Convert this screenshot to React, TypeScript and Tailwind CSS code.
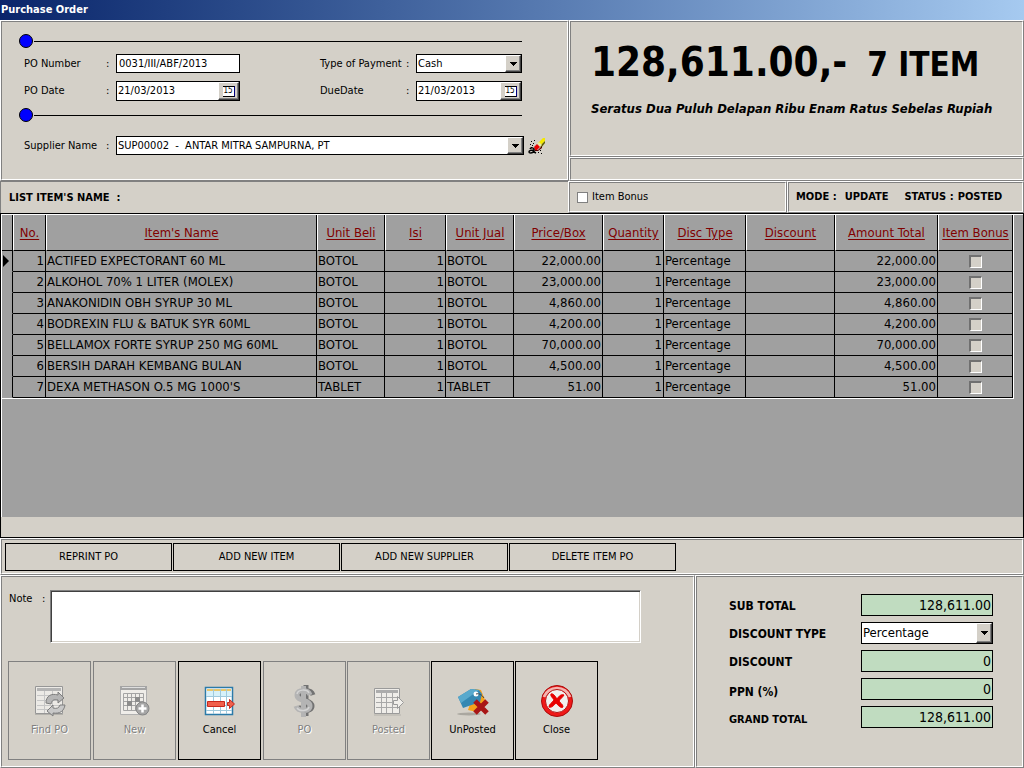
import React, { useState } from "react";

const items = [
  { name: "ACTIFED EXPECTORANT 60 ML", unit: "BOTOL", price: "22,000.00" },
  { name: "ALKOHOL 70% 1 LITER (MOLEX)", unit: "BOTOL", price: "23,000.00" },
  { name: "ANAKONIDIN OBH SYRUP 30 ML", unit: "BOTOL", price: "4,860.00" },
  { name: "BODREXIN FLU & BATUK SYR 60ML", unit: "BOTOL", price: "4,200.00" },
  { name: "BELLAMOX FORTE SYRUP 250 MG 60ML", unit: "BOTOL", price: "70,000.00" },
  { name: "BERSIH DARAH KEMBANG BULAN", unit: "BOTOL", price: "4,500.00" },
  { name: "DEXA METHASON O.5 MG 1000'S", unit: "TABLET", price: "51.00" },
];

const columns = [
  { title: "No.", width: "w-[33px]" },
  { title: "Item's Name", width: "" },
  { title: "Unit Beli", width: "w-[68px]" },
  { title: "Isi", width: "w-[61px]" },
  { title: "Unit Jual", width: "w-[68px]" },
  { title: "Price/Box", width: "w-[89px]" },
  { title: "Quantity", width: "w-[61px]" },
  { title: "Disc Type", width: "w-[82px]" },
  { title: "Discount", width: "w-[89px]" },
  { title: "Amount Total", width: "w-[103px]" },
  { title: "Item Bonus", width: "w-[75px]" },
];

// raised outer edge with a sunken line inside it
function Panel({ className = "", children }: { className?: string; children?: React.ReactNode }) {
  return (
    <div className="flex h-full min-w-0 border border-t-white border-l-white border-r-[#808080] border-b-[#808080]">
      <div
        className={
          "min-w-0 flex-1 border border-t-[#808080] border-l-[#808080] border-r-white border-b-white " + className
        }
      >
        {children}
      </div>
    </div>
  );
}

function Divider() {
  return (
    <div className="flex items-center gap-px">
      <svg width="14" height="14" viewBox="0 0 14 14" aria-hidden="true">
        <circle cx="7" cy="7" r="6.5" fill="#0000ff" stroke="#000" />
      </svg>
      <div className="h-px w-[488px] bg-black" />
    </div>
  );
}

function SelectBox({ id, options, className }: { id: string; options: string[]; className: string }) {
  return (
    <div className={"relative border border-black bg-white " + className}>
      <select id={id} className="h-full w-full appearance-none bg-white pr-4 pl-px outline-none">
        {options.map((o) => (
          <option key={o}>{o}</option>
        ))}
      </select>
      <span className="pointer-events-none absolute inset-y-0 right-0 flex w-4 items-center justify-center border border-t-white border-l-white border-r-[#404040] border-b-[#404040] bg-[#d4d0c8] shadow-[inset_-1px_-1px_0_#808080]">
        <svg width="7" height="4" viewBox="0 0 7 4" shapeRendering="crispEdges" aria-hidden="true">
          <path d="M0 0h7v1H0zM1 1h5v1H1zM2 2h3v1H2zM3 3h1v1H3z" />
        </svg>
      </span>
    </div>
  );
}

function DateBox({ id, className }: { id: string; className: string }) {
  const [value, setValue] = useState("21/03/2013");

  return (
    <div className={"flex h-5 border border-black bg-white " + className}>
      <input
        id={id}
        type="text"
        value={value}
        onChange={(e) => setValue(e.target.value)}
        className="min-w-0 flex-1 pl-px outline-none"
      />
      <button
        type="button"
        aria-label="Open calendar"
        className="flex w-[21px] items-center justify-center border border-t-white border-l-white border-r-[#404040] border-b-[#404040] bg-[#d4d0c8] shadow-[inset_-1px_-1px_0_#808080]"
      >
        <span className="flex h-[11px] w-3 items-center justify-center border-t border-r border-b border-black border-r-[#000080] bg-white text-[8px] leading-none">
          15
        </span>
      </button>
    </div>
  );
}

function EraserIcon() {
  return (
    <svg width="18" height="18" viewBox="0 0 18 18" aria-hidden="true">
      <path d="M10 6l5-5h2v3l-5 5z" fill="#f4e800" />
      <path d="M12 9l5-5v2l-4 5z" fill="#606000" />
      <path d="M9 7l2-2 3 3-2 2z" fill="#e8e8a0" />
      <path d="M6 10l3-3 3 3-3 3H7z" fill="#e80000" />
      <path d="M7 13h3l4-4v2l-4 3H7z" fill="#500" />
      <path d="M2 12c1-2 4-1 4 0v4M6 13c-3 0-5 1-5 2s3 2 5-1M6 15l2 1" fill="none" stroke="#000" strokeWidth="1.500" />
      <path
        d="M3 4h1v1H3zM5 6h1v1H5zM2 7h1v1H2zM4 8h1v1H4zM3 10h1v1H3zM6 3h1v1H6zM10 15h1v1h-1zM12 13h1v1h-1zM13 16h1v1h-1z"
        fill="#000"
        shapeRendering="crispEdges"
      />
    </svg>
  );
}

function FindIcon() {
  return (
    <svg width="32" height="32" viewBox="1 0 32 32" aria-hidden="true">
      <path d="M2.500 1.500h27v27h-27z" fill="#eceae6" stroke="#969696" />
      <path d="M4 3h24v3H4z" fill="#b4b4b4" />
      <path d="M4 10.500h24M4 15.500h24M4 20.500h24M4 24.500h24M11.500 6v22M19.500 6v22" stroke="#c6c6c6" />
      <path d="M2 29.500h28" stroke="#b4b2ac" />
      <path
        d="M13 18c0-7 5-10 12-8V7l6 6-6 5v-3c-4-1-6 0-7 4z"
        fill="#b5b5b5"
        stroke="#7e7e7e"
        strokeLinejoin="round"
      />
      <path
        d="M32 20c-1 6-5 9-12 8v3l-6-5 6-6v3c4 1 6 0 7-3z"
        fill="#c8c8c8"
        stroke="#7e7e7e"
        strokeLinejoin="round"
      />
    </svg>
  );
}

function NewIcon() {
  return (
    <svg width="32" height="32" viewBox="1 0 32 32" aria-hidden="true">
      <path d="M2.500 1.500h26v28h-26z" fill="#efede9" stroke="#b0b0b0" />
      <path d="M2 1h27v4H2z" fill="#a4a4a4" />
      <path d="M4 2.500h23" stroke="#dedede" />
      <path
        d="M5.500 8.500h20v17h-20zM9.500 8v17M13.500 8v17M17.500 8v17M21.500 8v17M5 12.500h21M5 16.500h21M5 20.500h21"
        fill="none"
        stroke="#a4a4a4"
      />
      <path d="M17 12h5v5h-5zM9 16h5v5H9z" fill="#8c8c8c" />
      <circle cx="24.500" cy="23.500" r="6.500" fill="#a6a6a6" stroke="#858585" />
      <path d="M24.500 19.500v8M20.500 23.500h8" stroke="#fff" strokeWidth="2.500" />
    </svg>
  );
}

function CancelIcon() {
  return (
    <svg width="32" height="32" viewBox="1 0 32 32" aria-hidden="true">
      <path d="M2.500 2.500h27v27h-27z" fill="#fff" stroke="#2b7aa8" strokeWidth="1.500" />
      <path d="M4 6h24v6H4z" fill="#d6f1fa" />
      <path d="M3 11.500h26M3 20.500h26M3 25.500h26M10.500 4v25M17.500 4v25M23.500 4v25" stroke="#9fc9dc" />
      <path d="M4 4h6v2H4zM11 4h6v2h-6zM18 4h5v2h-5zM24 4h4v2h-4z" fill="#e8c66c" />
      <path d="M4.500 16.500h17v5h-17z" fill="#f0604c" stroke="#c8281c" />
      <path d="M24.500 17.500h2v-3l5 4.500-5 4.500v-3h-2z" fill="#f0604c" stroke="#c8281c" />
    </svg>
  );
}

function MoneyIcon() {
  return (
    <svg width="32" height="32" viewBox="1 0 32 32" fill="none" aria-hidden="true">
      <path
        d="M25 10c-2-6-13-6-13 0 0 7 12 4 12 11 0 6-12 6-14 0M18 0v31"
        stroke="#727272"
        strokeWidth="5"
      />
      <path
        d="M22 10c-2-6-13-6-13 0 0 7 13 4 13 11 0 6-12 6-14 0M15.500 1v31"
        stroke="#b4b4b4"
        strokeWidth="5"
      />
      <path d="M21 8c-2-4-11-4-12 1M9 23c3 4 11 3 12-1" stroke="#d4d4d4" strokeWidth="1.500" />
    </svg>
  );
}

function PostedIcon() {
  return (
    <svg width="32" height="32" viewBox="1 0 32 32" aria-hidden="true">
      <path d="M2.500 3.500h25v25h-25z" fill="#efede9" stroke="#9a9a9a" />
      <path d="M4 5h22v3H4z" fill="#acacac" />
      <path d="M4 12.500h22M4 17.500h22M4 22.500h22M9.500 8v20M14.500 8v20M20.500 8v20" stroke="#a8a8a8" />
      <path d="M2 30h27" stroke="#b4b2ac" />
      <path d="M21.500 15.500h4v-4l6 6-6 6v-4h-4z" fill="#f1efeb" stroke="#9a9a9a" />
    </svg>
  );
}

function UnPostedIcon() {
  return (
    <svg width="32" height="32" viewBox="0 0 32 32" aria-hidden="true">
      <ellipse cx="12" cy="29" rx="12" ry="1.500" fill="#aaa7a0" />
      <path d="M18 4l6 1 4 10-8 12-9-2z" fill="#f5a21a" />
      <path d="M1 12l13-8 8 1 3 4-2 8L6 23z" fill="#3588b2" />
      <path d="M1 12l13-8 8 1-18 13z" fill="#58a9cd" />
      <circle cx="19" cy="9" r="2.500" fill="#fff" />
      <path d="M19 9c3-1 6 1 8 4" fill="none" stroke="#444" />
      <path d="M18 16l12 12M30 16L18 28" stroke="#a81616" strokeWidth="5" />
    </svg>
  );
}

function CloseIcon() {
  return (
    <svg width="34" height="34" viewBox="0 0 34 34" aria-hidden="true">
      <circle cx="17" cy="17" r="15.500" fill="#f01818" stroke="#a80c0c" />
      <path d="M4 13a14 14 0 0 1 26 0" fill="none" stroke="#f4b4b0" strokeWidth="3" />
      <circle cx="17" cy="17" r="11.500" fill="#f1efed" stroke="#b41010" />
      <path
        d="M11 10c2-1 4 2 6 5 2-3 4-5 7-4-1 2-4 4-5 6 1 2 4 3 4 6-2 2-5-2-7-4-2 2-4 5-7 4 0-3 3-4 5-7-1-2-4-4-3-6z"
        fill="#e80000"
        stroke="#e80000"
        strokeLinejoin="round"
      />
    </svg>
  );
}

function ToolButton({
  label,
  icon,
  disabled,
}: {
  label: string;
  icon: React.ReactNode;
  disabled?: boolean;
}) {
  return (
    <button
      type="button"
      disabled={disabled}
      className="flex h-[99px] w-[83px] flex-col items-center justify-center gap-1 border border-black disabled:border-[#808080] disabled:text-[#808080] disabled:[text-shadow:1px_1px_0_#fff]"
    >
      <span className="flex h-[34px] items-center">{icon}</span>
      <span className="leading-4">{label}</span>
    </button>
  );
}

function TotalField({ id, value }: { id: string; value: string }) {
  return (
    <input
      id={id}
      type="text"
      readOnly
      value={value}
      className="h-[22px] w-[132px] border border-black bg-[#c0dcc0] pr-px text-right text-sm outline-none"
    />
  );
}

export default function App() {
  const [poNumber, setPoNumber] = useState("0031/III/ABF/2013");
  const [note, setNote] = useState("");
  const [itemBonus, setItemBonus] = useState(false);

  return (
    <div className="flex min-h-screen flex-col bg-[#d4d0c8] font-['DejaVu_Sans_Condensed','DejaVu_Sans',sans-serif] text-[11px] leading-4 text-black">
      <header className="flex h-5 items-center bg-linear-to-r from-[#0a246a] to-[#a6caf0] pl-px">
        <h1 className="font-bold text-white">Purchase Order</h1>
      </header>

      <section className="grid h-[161px] grid-cols-[569fr_455fr]">
        <Panel className="pt-3 pl-[17px]">
          <Divider />
          <div className="mt-1.5 grid grid-cols-[82px_10px_124px_80px_86px_10px_106px] items-center gap-y-2 pl-[5px]">
            <label htmlFor="po-number">PO Number</label>
            <span>:</span>
            <input
              id="po-number"
              type="text"
              value={poNumber}
              onChange={(e) => setPoNumber(e.target.value)}
              className="h-[19px] w-[124px] border border-black bg-white px-0.5 outline-none"
            />
            <span />
            <label htmlFor="payment">Type of Payment</label>
            <span>:</span>
            <SelectBox id="payment" options={["Cash", "Credit"]} className="h-[19px]" />

            <label htmlFor="po-date">PO Date</label>
            <span>:</span>
            <DateBox id="po-date" className="w-[124px]" />
            <span />
            <label htmlFor="due-date">DueDate</label>
            <span>:</span>
            <DateBox id="due-date" className="w-[106px]" />
          </div>
          <div className="mt-[7px]">
            <Divider />
          </div>
          <div className="mt-3.5 flex items-center pl-[5px]">
            <label htmlFor="supplier" className="w-[82px]">
              Supplier Name
            </label>
            <span className="w-2.5">:</span>
            <SelectBox
              id="supplier"
              options={["SUP00002\u00a0 -\u00a0 ANTAR MITRA SAMPURNA, PT"]}
              className="h-[19px] w-[408px]"
            />
            <button type="button" aria-label="Clear supplier" className="ml-1">
              <EraserIcon />
            </button>
          </div>
        </Panel>

        <div className="grid grid-rows-[137px_24px]">
          <Panel className="pt-4 pl-5">
            <div className="flex items-baseline gap-5 font-bold whitespace-nowrap">
              <span className="text-[40px] leading-[48px]">128,611.00,-</span>
              <span className="text-[33px] leading-[48px]">7 ITEM</span>
            </div>
            <p className="mt-3 text-[13px] font-bold whitespace-nowrap italic">
              Seratus Dua Puluh Delapan Ribu Enam Ratus Sebelas Rupiah
            </p>
          </Panel>
          <Panel />
        </div>
      </section>

      <section className="grid h-8 grid-cols-[568fr_219fr_237fr] font-bold">
        <h2 className="flex items-center border-t border-l border-t-[#808080] border-l-[#808080] pl-2 whitespace-pre">
          {"LIST ITEM'S NAME  :"}
        </h2>
        <Panel className="flex items-center pl-[7px]">
          <label className="flex items-center gap-1 font-normal">
            <input
              type="checkbox"
              checked={itemBonus}
              onChange={(e) => setItemBonus(e.target.checked)}
              className="size-[11px] appearance-none border border-[#808080] bg-white checked:bg-black"
            />
            Item Bonus
          </label>
        </Panel>
        <Panel className="flex items-center gap-4 pl-[7px]">
          <span className="flex gap-2">
            <span>MODE :</span>
            <span>UPDATE</span>
          </span>
          <span className="flex gap-1">
            <span>STATUS :</span>
            <span>POSTED</span>
          </span>
        </Panel>
      </section>

      <section className="border border-black">
        <div className="min-h-[303px] border-t border-l border-white bg-[#a0a0a0] pr-[9px]">
          <table className="w-full table-fixed border-separate border-spacing-0 border-r border-b border-white text-[13px]">
            <thead>
              <tr className="h-9">
                <th className="w-[11px] border-r border-b border-black" aria-label="Current row" />
                {columns.map((c) => (
                  <th
                    key={c.title}
                    className={
                      "border-r border-b border-l border-r-black border-b-black border-l-white p-0 font-normal whitespace-nowrap text-[#800000] underline underline-offset-2 " +
                      c.width
                    }
                  >
                    {c.title}
                  </th>
                ))}
              </tr>
            </thead>
            <tbody>
              {items.map((item, i) => (
                <tr
                  key={item.name}
                  className="h-[21px] *:border-r *:border-b *:border-black *:px-px *:py-0 *:whitespace-nowrap"
                >
                  <td className="border-b-transparent!">
                    {i === 0 && (
                      <svg width="6" height="12" viewBox="0 0 6 12" aria-hidden="true">
                        <path d="M0 0l6 6-6 6z" />
                      </svg>
                    )}
                  </td>
                  <td className="text-right">{i + 1}</td>
                  <td>{item.name}</td>
                  <td>{item.unit}</td>
                  <td className="text-right">1</td>
                  <td>{item.unit}</td>
                  <td className="text-right">{item.price}</td>
                  <td className="text-right">1</td>
                  <td>Percentage</td>
                  <td />
                  <td className="text-right">{item.price}</td>
                  <td>
                    <input
                      type="checkbox"
                      aria-label={"Item bonus " + item.name}
                      className="mx-auto mt-px block size-[13px] appearance-none border-t-2 border-r border-b border-l-2 border-t-[#707070] border-r-white border-b-white border-l-[#707070] bg-[#d4d0c8] checked:bg-black"
                    />
                  </td>
                </tr>
              ))}
            </tbody>
          </table>
        </div>
        <div className="h-5" />
      </section>

      <section className="h-[37px]">
        <Panel className="flex gap-px pt-[3px] pl-[3px]">
          {["REPRINT PO", "ADD NEW ITEM", "ADD NEW SUPPLIER", "DELETE ITEM PO"].map((label) => (
            <button key={label} type="button" className="h-7 w-[167px] border border-black">
              {label}
            </button>
          ))}
        </Panel>
      </section>

      <section className="grid flex-1 grid-cols-[695fr_329fr]">
        <Panel className="pt-[13px] pl-1.5">
          <div className="flex items-start pl-px">
            <label htmlFor="note" className="w-[33px] pt-px">
              Note
            </label>
            <span className="w-2 pt-px">:</span>
            <textarea
              id="note"
              value={note}
              onChange={(e) => setNote(e.target.value)}
              className="h-[53px] w-[591px] resize-none border border-t-[#808080] border-l-[#808080] border-r-white border-b-white bg-white p-1 shadow-[inset_1px_1px_0_#404040,inset_-1px_-1px_0_#d4d0c8] outline-none"
            />
          </div>
          <div className="mt-[18px] flex gap-px">
            <div className="flex gap-0.5">
              <ToolButton label="Find PO" icon={<FindIcon />} disabled />
              <ToolButton label="New" icon={<NewIcon />} disabled />
              <ToolButton label="Cancel" icon={<CancelIcon />} />
              <ToolButton label="PO" icon={<MoneyIcon />} disabled />
            </div>
            <div className="flex gap-px">
              <ToolButton label="Posted" icon={<PostedIcon />} disabled />
              <ToolButton label="UnPosted" icon={<UnPostedIcon />} />
              <ToolButton label="Close" icon={<CloseIcon />} />
            </div>
          </div>
        </Panel>

        <Panel className="pt-[17px] pl-8">
          <div className="grid grid-cols-[132px_132px] items-center gap-y-1.5 text-xs">
            <label htmlFor="sub-total" className="pt-0.5 font-bold">
              SUB TOTAL
            </label>
            <TotalField id="sub-total" value="128,611.00" />
            <label htmlFor="discount-type" className="pt-0.5 font-bold">
              DISCOUNT TYPE
            </label>
            <SelectBox id="discount-type" options={["Percentage", "Value"]} className="h-[22px] text-[13px]" />
            <label htmlFor="discount" className="pt-0.5 font-bold">
              DISCOUNT
            </label>
            <TotalField id="discount" value="0" />
            <label htmlFor="ppn" className="pt-1.5 font-bold">
              PPN (%)
            </label>
            <TotalField id="ppn" value="0" />
            <label htmlFor="grand-total" className="pt-1.5 text-[11px] font-bold">
              GRAND TOTAL
            </label>
            <TotalField id="grand-total" value="128,611.00" />
          </div>
        </Panel>
      </section>
    </div>
  );
}
